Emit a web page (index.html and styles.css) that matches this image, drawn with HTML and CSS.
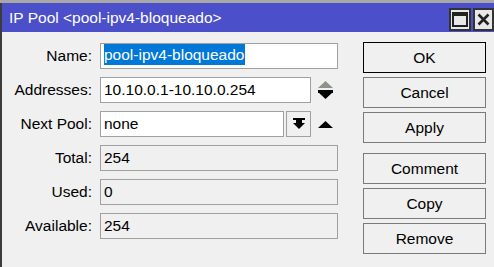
FILE: index.html
```html
<html lang="en">
<head>
    <meta charset="UTF-8">
    <title>IP Pool</title>
    <link rel="stylesheet" href="styles.css">
</head>
<body>
    <div class="window">
        <div class="titlebar">
            <span class="title">IP Pool &lt;pool-ipv4-bloqueado&gt;</span>
            <div class="title-buttons">
                <span class="tbtn">
                    <svg width="16" height="15" viewBox="0 0 16 15"><rect x="1" y="1" width="14" height="13" fill="none" stroke="#222" stroke-width="2"/><rect x="1" y="1" width="14" height="3" fill="#222"/></svg>
                </span>
                <span class="tbtn">
                    <svg width="13" height="13" viewBox="0 0 13 13"><path d="M1.5 1.5 L11.5 11.5 M11.5 1.5 L1.5 11.5" stroke="#222" stroke-width="2.6"/></svg>
                </span>
            </div>
        </div>
        <div class="content">
            <div class="form">
                <label>Name:</label>
                <div class="field"><div class="input"><span class="selected">pool-ipv4-bloqueado</span></div></div>

                <label>Addresses:</label>
                <div class="field">
                    <div class="input w-addr">10.10.0.1-10.10.0.254</div>
                    <svg class="side-icon" width="15" height="19" viewBox="0 0 15 19"><polygon points="7.5,0 15,7 0,7" fill="#8c948a"/><rect x="0" y="9" width="15" height="3" fill="#000"/><polygon points="0,11 15,11 7.5,18" fill="#000"/></svg>
                </div>

                <label>Next Pool:</label>
                <div class="field">
                    <div class="input w-pool">none</div>
                    <span class="drop">
                        <svg width="12" height="12" viewBox="0 0 12 12"><rect x="0" y="0" width="12" height="2" fill="#000"/><rect x="3" y="2" width="6" height="4" fill="#000"/><polygon points="0,5 12,5 6,11" fill="#000"/></svg>
                    </span>
                    <svg class="side-icon up" width="15" height="8" viewBox="0 0 15 8"><polygon points="7.5,0 15,7 0,7" fill="#000"/></svg>
                </div>

                <label>Total:</label>
                <div class="field"><div class="input readonly">254</div></div>

                <label>Used:</label>
                <div class="field"><div class="input readonly">0</div></div>

                <label>Available:</label>
                <div class="field"><div class="input readonly">254</div></div>
            </div>
            <div class="buttons">
                <button class="btn default">OK</button>
                <button class="btn">Cancel</button>
                <button class="btn">Apply</button>
                <button class="btn spaced">Comment</button>
                <button class="btn">Copy</button>
                <button class="btn">Remove</button>
            </div>
        </div>
    </div>
</body>
</html>
```

FILE: styles.css
```css
html {
    margin: 0;
    padding: 0;
}
body {
    margin: 0;
    padding: 0;
    background-color: #a8a8a8;
    font-family: "Liberation Sans", Arial, sans-serif;
    font-size: 15.5px;
    color: #000;
}
.window {
    margin-top: 3px;
    height: 264px;
    border-left: 2px solid #3c3c3c;
    background-color: #f0f0f0;
}
.titlebar {
    height: 29px;
    background-color: #4b4fca;
    display: flex;
    align-items: flex-end;
    justify-content: space-between;
}
.title {
    color: #fff;
    padding-left: 7px;
    padding-bottom: 5px;
}
.title-buttons {
    display: flex;
    gap: 2px;
    padding-bottom: 1px;
}
.tbtn {
    width: 18px;
    height: 19px;
    border: 2px solid #333;
    background-color: #e8e8e8;
    display: flex;
    align-items: center;
    justify-content: center;
}
.tbtn:last-child {
    width: 17px;
}
.content {
    display: flex;
    padding-top: 10px;
}
.form {
    margin-top: 1px;
    display: grid;
    grid-template-columns: 90px 238px;
    column-gap: 8px;
    row-gap: 8px;
    grid-auto-rows: 26px;
}
.form label {
    text-align: right;
    line-height: 26px;
}
.field {
    display: flex;
    align-items: center;
}
.input {
    box-sizing: border-box;
    width: 238px;
    height: 26px;
    border: 1px solid #a0a0a0;
    background-color: #fff;
    padding-left: 3px;
    line-height: 24px;
    white-space: nowrap;
}
.input.readonly {
    background-color: #f0f0f0;
}
.w-addr {
    width: 211px;
}
.w-pool {
    width: 184px;
}
.selected {
    background-color: #0078d7;
    color: #fff;
    display: inline-block;
    line-height: 21px;
    padding-right: 1px;
}
.drop {
    box-sizing: border-box;
    width: 25px;
    height: 26px;
    margin-left: 2px;
    border: 1px solid #a0a0a0;
    background-color: #f0f0f0;
    display: flex;
    align-items: center;
    justify-content: center;
}
.side-icon {
    margin-left: 7px;
}
.side-icon.up {
    margin-left: 7px;
    margin-top: 2px;
}
.buttons {
    margin-left: 25px;
    display: flex;
    flex-direction: column;
    gap: 4px;
}
.btn {
    width: 123px;
    height: 31px;
    border: 1px solid #7a7a7a;
    background-color: #f0f0f0;
    font-family: inherit;
    font-size: 15.5px;
    color: #000;
    padding: 0;
}
.btn.default {
    border-color: #000;
}
.btn.spaced {
    margin-top: 6px;
}
```
